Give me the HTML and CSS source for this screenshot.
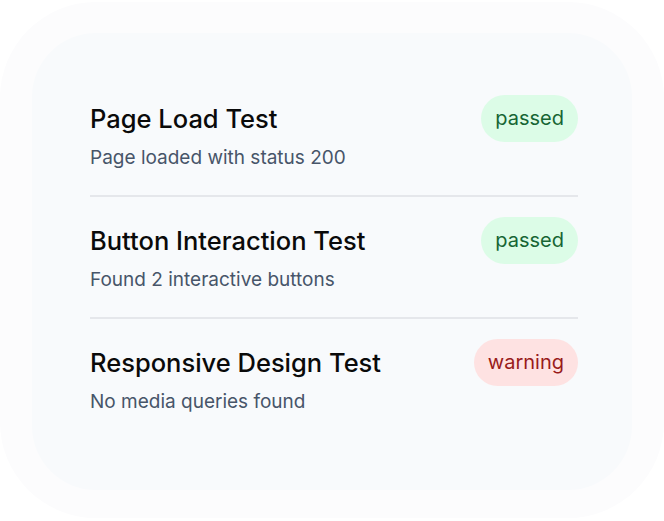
FILE: index.html
```html
<!DOCTYPE html>
<html lang="en">
<head>
    <meta charset="UTF-8">
    <meta name="viewport" content="width=device-width, initial-scale=1.0">
    <title>Test Results</title>
    <link rel="stylesheet" href="styles.css">
</head>
<body>

    <div class="frame">
        <div class="card">
            <div class="test">
                <div class="test-head">
                    <h2 class="test-name">Page Load Test</h2>
                    <span class="badge passed">passed</span>
                </div>
                <p class="test-detail">Page loaded with status 200</p>
            </div>

            <div class="test">
                <div class="test-head">
                    <h2 class="test-name">Button Interaction Test</h2>
                    <span class="badge passed">passed</span>
                </div>
                <p class="test-detail">Found 2 interactive buttons</p>
            </div>

            <div class="test">
                <div class="test-head">
                    <h2 class="test-name">Responsive Design Test</h2>
                    <span class="badge warning">warning</span>
                </div>
                <p class="test-detail">No media queries found</p>
            </div>
        </div>
    </div>

</body>
</html>
```

FILE: styles.css
```css
body {
    margin: 0;
    font-family: Inter, "Noto Sans", sans-serif;
    background-color: #fff;
    color: #0a0a0a;
}
.frame {
    margin-top: 2px;
    padding: 31px 32px 28px;
    background-color: #fcfcfd;
    border-radius: 96px;
    height: 457px;
}
.card {
    background-color: #f8fafc;
    border-radius: 64px;
    padding: 42px 54px 0 58px;
    height: 457px;
    box-sizing: border-box;
}
.test {
    padding: 20px 0 23px;
    border-bottom: 2px solid #e5e7eb;
}
.test:last-child {
    border-bottom: none;
}
.test-head {
    display: flex;
    justify-content: space-between;
    align-items: center;
}
.test-name {
    margin: 0;
    font-size: 25.5px;
    font-weight: 500;
    line-height: 32px;
}
.test-detail {
    margin: 2px 0 0;
    font-size: 19px;
    line-height: 28px;
    color: #475569;
}
.badge {
    display: inline-block;
    padding: 10px 14px;
    border-radius: 999px;
    font-size: 20px;
    line-height: 27px;
}
.passed {
    background-color: #dcfce7;
    color: #166534;
}
.warning {
    background-color: #fee2e2;
    color: #991b1b;
}
```
